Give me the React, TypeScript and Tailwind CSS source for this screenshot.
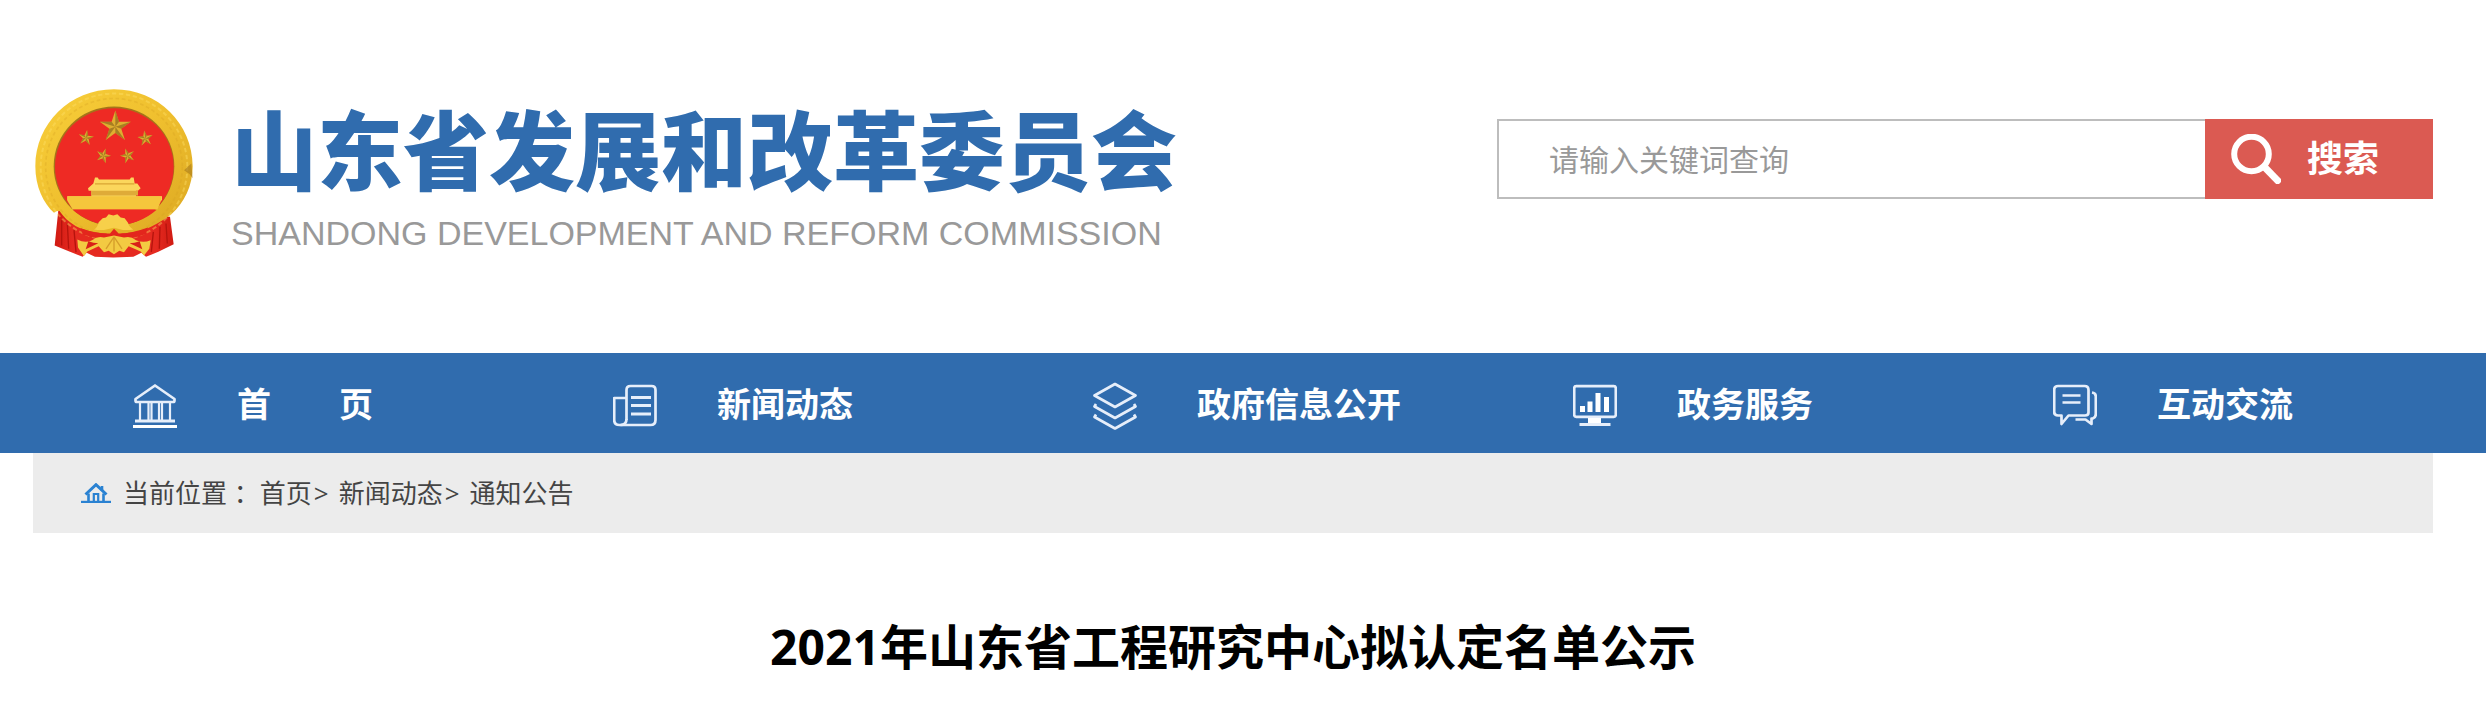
import React, { useState } from "react";
import type { FormEvent, ReactNode } from "react";

const navItems: { label: string; icon: ReactNode }[] = [
  { label: "首\u3000\u3000页", icon: <BankIcon /> },
  { label: "新闻动态", icon: <NewsIcon /> },
  { label: "政府信息公开", icon: <LayersIcon /> },
  { label: "政务服务", icon: <MonitorIcon /> },
  { label: "互动交流", icon: <ChatIcon /> },
];

const crumbs = ["首页", "新闻动态", "通知公告"];

const iconProps = {
  className: "h-12 w-11 shrink-0",
  viewBox: "0 0 44 48",
  fill: "none",
  stroke: "#e6eefa",
  strokeWidth: 2.7,
  strokeLinejoin: "round" as const,
  "aria-hidden": true,
};

function BankIcon() {
  return (
    <svg {...iconProps}>
      <path d="M22 3.5 2.5 17v1.5q0 1.5 1.5 1.5h36q1.5 0 1.5-1.5V17Z" />
      <path d="M7 20v18M15.5 20v18M18.5 20v18M26 20v18M29 20v18M37 20v18" strokeWidth="2.2" />
      <path d="M2 39h40" strokeWidth="3" />
      <path d="M0 44.5h44" stroke="#fff" strokeWidth="3" />
    </svg>
  );
}

function NewsIcon() {
  return (
    <svg {...iconProps}>
      <path d="M13.5 38V8q0-4 4-4h21q4 0 4 4v30q0 5-5 5H6.500q-5.300 0-5.300-5V16h12.300" />
      <path d="M13.500 37q0 6-6 6" />
      <path d="M18 15.500h20M18 23.500h20M18 32h20" strokeWidth="3" />
    </svg>
  );
}

function LayersIcon() {
  return (
    <svg {...iconProps}>
      <path d="M22 2 1.500 13.500 22 25l20.500-11.500Z" />
      <path d="M3 22 1.500 24.500 22 36l20.500-11.500L41 22" />
      <path d="M3 32.500 1.500 35 22 46.500 42.500 35 41 32.500" />
    </svg>
  );
}

function MonitorIcon() {
  return (
    <svg {...iconProps}>
      <rect x="1.200" y="4.200" width="41.600" height="30.600" rx="2" />
      <path d="M9.500 30v-6M17 30V19.500M25 30V11M33.500 30V15" stroke="#fff" strokeWidth="5" />
      <path d="M15 36h13v5H15Z" fill="#fff" stroke="none" />
      <path d="M6.500 42.500h31" strokeWidth="3" />
    </svg>
  );
}

function ChatIcon() {
  return (
    <svg {...iconProps}>
      <path d="M5 4h26.500q4 0 4 4v22.500q0 3-3.500 3H15.500L8.500 42v-8.500H5q-3.800 0-3.800-3.500V8q0-4 3.800-4Z" />
      <path d="M39 10.500q3.800.5 3.800 4V32q0 3.500-3 4.500h-1.300V42l-6-4.500h-10" />
      <path d="M9.500 13.500h18M9.500 20.500h18" strokeWidth="2.700" />
    </svg>
  );
}

function HomeIcon() {
  return (
    <svg className="h-5 w-[30px] shrink-0" viewBox="0 0 30 20" fill="none" stroke="#2a82d2" aria-hidden>
      <path d="M4.500 11.500 15 1.700l10.500 9.800" strokeWidth="3" />
      <path d="M21 3v5" strokeWidth="2.600" />
      <path d="M7.500 10.500v8M22.500 10.500v8" strokeWidth="2.600" />
      <path d="M12.800 18v-7h4.400v7" strokeWidth="2.200" />
      <path d="M0 18.900h30" strokeWidth="2.200" />
    </svg>
  );
}

function SearchIcon() {
  return (
    <svg className="size-[50px] shrink-0" viewBox="0 0 50 50" fill="none" stroke="#fff" aria-hidden>
      <circle cx="20.500" cy="20" r="17.300" strokeWidth="6" />
      <path d="m32 31.500 17 17.500" strokeWidth="7" />
    </svg>
  );
}

function Star({ x, y, r, turn = 0 }: { x: number; y: number; r: number; turn?: number }) {
  return (
    <g transform={`translate(${x} ${y}) rotate(${turn}) scale(${r})`}>
      <path
        d="M0-1 .225-.309.951-.309.363.118.588.809 0 .382-.588.809-.363.118-.951-.309-.225-.309Z"
        fill="#dfae30"
      />
      <path
        d="M0-1 .225-.309 0 0ZM.951-.309.363.118 0 0ZM.588.809 0 .382 0 0ZM-.588.809-.363.118 0 0ZM-.951-.309-.225-.309 0 0Z"
        fill="#8f6a1c"
        opacity=".7"
      />
    </g>
  );
}

function Emblem() {
  return (
    <svg className="h-[169px] w-[158px] shrink-0" viewBox="45 57 474 506" role="img" aria-label="国徽">
      <defs>
        <linearGradient id="gold" x1="0" y1="0" x2="1" y2="1">
          <stop offset="0" stopColor="#f8cf3a" />
          <stop offset=".5" stopColor="#efbf2e" />
          <stop offset="1" stopColor="#dba722" />
        </linearGradient>
        <linearGradient id="cloth" x1="0" y1="0" x2="1" y2="0">
          <stop offset="0" stopColor="#d01a12" />
          <stop offset=".15" stopColor="#e52a20" />
          <stop offset=".85" stopColor="#e52a20" />
          <stop offset="1" stopColor="#d01a12" />
        </linearGradient>
      </defs>
      <path
        d="M115 420 104 526 150 545 188 560 200 548 225 560 280 562 340 560 364 548 378 560 415 545 461 522 450 440Z"
        fill="url(#cloth)"
      />
      <path d="M125 450v76M142 460l4 76M162 480l6 66M438 460l4 60M420 470l-2 66M400 485l-6 60" stroke="#b5140d" strokeWidth="4" />
      <path
        d="M282 57C150 57 46 160 46 288c0 62 24 110 56 140q6-6 16-6c12 18 28 34 50 46 30 14 62 20 90 22l24 10 24-10c28-2 60-8 90-22 24-12 42-24 58-36 38-34 64-84 64-144C518 160 414 57 282 57Z"
        fill="url(#gold)"
      />
      <circle cx="282" cy="290" r="205" fill="none" stroke="#d3a022" strokeWidth="5" strokeDasharray="11 8" opacity=".3" />
      <circle cx="282" cy="290" r="220" fill="none" stroke="#ffe16a" strokeWidth="6" strokeDasharray="13 8" opacity=".4" />
      <path d="M492 300q16 8 26 24l-4-44Z" fill="#a97a1a" opacity=".6" />
      <ellipse cx="282" cy="288" rx="181" ry="179" fill="#a5741a" />
      <ellipse cx="283" cy="290" rx="178" ry="176" fill="#ee2a24" />
      <Star x={286} y={170} r={49} />
      <Star x={198} y={203} r={24} turn={8} />
      <Star x={376} y={205} r={24} turn={-8} />
      <Star x={250} y={257} r={23} turn={18} />
      <Star x={323} y={257} r={23} turn={-18} />
      <path
        d="M225 322h8l4 6h92l4-6h8l3 18h8l10 14-8 8h-6v16h78v12H212h-70v-12h72v-16h-8l-2-8 16-14Z"
        fill="#fbd65c"
      />
      <path d="M214 362h140v14H214Z" fill="#dfab38" />
      <path d="M142 378h282v12l-12 28H158l-16-26Z" fill="#f5c63c" />
      <path d="M225 341h118" stroke="#d9a433" strokeWidth="4" />
      <path d="M158 419h252q-52 46-126 46t-126-46Z" fill="#ee2a24" />
      <path
        d="M222 478q10-6 14-22l12-12 10-2 8-10 14 4 12-4 10 10 12 2 10 14q4 14 16 20-26 4-40-1l-18-4-20 4q-18 5-40 1Z"
        fill="#f7d04a"
      />
      <path d="M182 474q50 18 88 16l12-14 14 14q40 0 88-18l-8 20q-46 16-94 16t-94-16Z" fill="#e3261d" />
      <path
        d="M172 508q24 12 44 2 18-14 36-8l30-6 30 6q20-6 36 8 22 10 44 0l-4 26-16 20-10-12-36-16-14 18-14-4-16 10-16-10-14 4-16-18-34 16-10 14-18-26Z"
        fill="#f3ca42"
      />
      <path d="m282 500-24 36M282 500l24 36M282 500v44" stroke="#d59e2a" strokeWidth="4" />
      <path d="M205 513q16 6 30 6l-38 18M359 513q-16 6-30 6l38 18" fill="#d92018" />
    </svg>
  );
}

function Header() {
  const [keyword, setKeyword] = useState("");

  const handleSubmit = (e: FormEvent) => {
    e.preventDefault();
  };

  return (
    <header className="flex items-start justify-between pt-[89px] pr-[53px] pb-[95px] pl-[35px]">
      <a href="#" className="flex items-start gap-[38px]">
        <Emblem />
        <div className="whitespace-nowrap">
          <div className="pt-3 text-[86px] leading-[100px] font-black text-[#306cae]">
            山东省发展和改革委员会
          </div>
          <div className="pt-3 text-[34px] leading-10 font-normal text-[#999] [font-family:'Liberation_Sans',sans-serif]">
            SHANDONG DEVELOPMENT AND REFORM COMMISSION
          </div>
        </div>
      </a>
      <form onSubmit={handleSubmit} className="mt-[30px] flex h-20 w-2/5 max-w-[936px]">
        <input
          type="text"
          aria-label="请输入关键词查询"
          placeholder="请输入关键词查询"
          value={keyword}
          onChange={(e) => setKeyword(e.target.value)}
          className="min-w-0 flex-1 border-2 border-r-0 border-[#bdbdbd] bg-white px-[50px] text-[30px] text-gray-800 outline-none placeholder:text-[#999]"
        />
        <button
          type="submit"
          className="flex w-[228px] shrink-0 items-center gap-[26px] bg-[#db5a52] pl-[26px] text-4xl font-bold text-white"
        >
          <SearchIcon />
          搜索
        </button>
      </form>
    </header>
  );
}

function Nav() {
  return (
    <nav className="bg-[#306cae] pr-[53px] pl-[33px]">
      <ul className="flex h-[100px]">
        {navItems.map((item) => (
          <li key={item.label} className="flex-1">
            <a
              href="#"
              className="flex h-full items-center gap-[60px] pt-1.5 pl-[100px] text-[34px] font-bold whitespace-nowrap text-white"
            >
              {item.icon}
              <span className="pb-1">{item.label}</span>
            </a>
          </li>
        ))}
      </ul>
    </nav>
  );
}

function Breadcrumb() {
  return (
    <div className="mr-[53px] ml-[33px] flex h-20 items-center bg-[#ececec] pl-12 text-[26px] text-[#444]">
      <HomeIcon />
      <span className="ml-3 whitespace-pre">当前位置 ：</span>
      {crumbs.map((crumb, idx) => (
        <React.Fragment key={crumb}>
          <a href="#">{crumb}</a>
          {idx < crumbs.length - 1 && <span className="mr-2.5 ml-0.5">&gt;</span>}
        </React.Fragment>
      ))}
    </div>
  );
}

const App = () => {
  return (
    <div className="min-h-screen bg-white [font-family:'Open_Sans','Noto_Sans_CJK_SC',sans-serif]" lang="zh-CN">
      <Header />
      <Nav />
      <Breadcrumb />
      <h1 className="mt-20 mr-[53px] ml-[33px] pb-10 text-center text-5xl leading-[68px] font-bold text-black">
        2021年山东省工程研究中心拟认定名单公示
      </h1>
    </div>
  );
};

export default App;
